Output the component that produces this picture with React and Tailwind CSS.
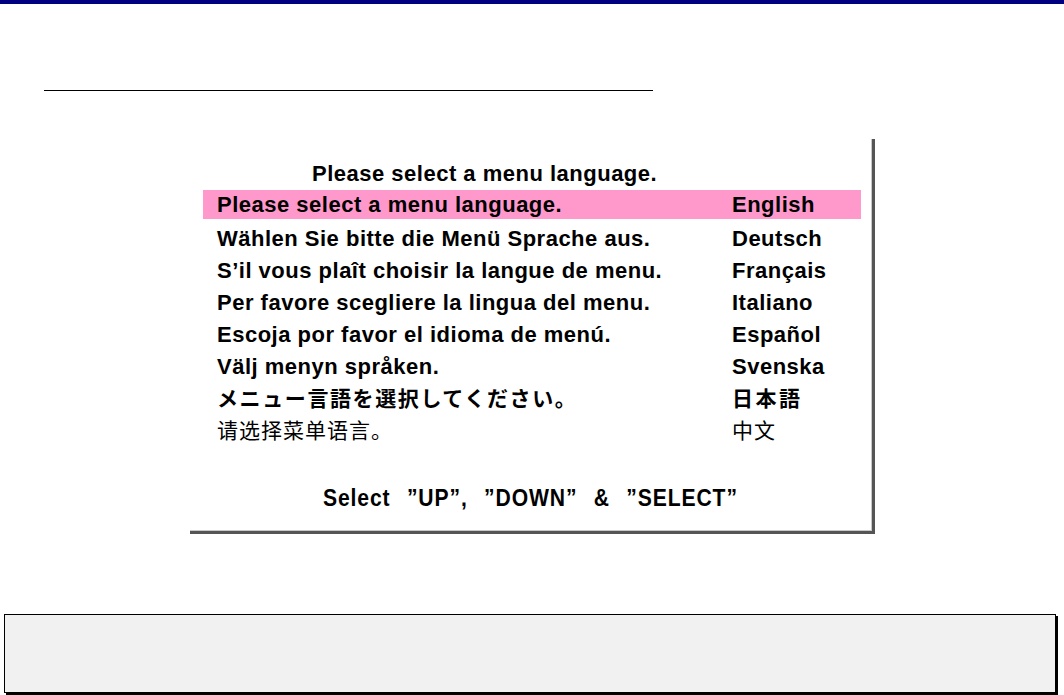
export default function App() {
  const rows = [
    ["Please select a menu language.", "English", false],
    ["Wählen Sie bitte die Menü Sprache aus.", "Deutsch", false],
    ["S’il vous plaît choisir la langue de menu.", "Français", false],
    ["Per favore scegliere la lingua del menu.", "Italiano", false],
    ["Escoja por favor el idioma de menú.", "Español", false],
    ["Välj menyn språken.", "Svenska", false],
    ["メニュー言語を選択してください。", "日本語", "jp"],
    ["请选择菜单语言。", "中文", "zh"],
  ];
  return (
    <div className="w-[1064px] h-[695px] bg-white overflow-hidden flex flex-col" style={{ fontFamily: '"Liberation Sans", Arial, sans-serif' }}>
      <div className="h-[4px] bg-[#000080]" />
      <div className="h-[86px]" />
      <div className="ml-[44px] w-[609px] h-[1px] bg-black" />
      <div className="h-[48px]" />
      <div className="ml-[190px] w-[685px] h-[395px] border-r-[3px] border-b-[3px] border-[#555] flex flex-col">
        <div className="flex-1 flex flex-col border-r border-b border-[#c8c8c8]">
          <div className="h-[51px] pl-[122px] pt-[22px] text-[22px] font-bold tracking-[0.5px] leading-[26px] text-black">
            Please select a menu language.
          </div>
          <div className="ml-[13px] w-[658px] flex flex-col">
            {rows.map(([a, b, kind], i) => (
              <div
                key={i}
                className={
                  i === 0
                    ? "h-[29px] mb-[3px] bg-[#ff99cc] flex items-center text-black"
                    : "h-[32px] flex items-center text-black"
                }
              >
                {kind === "jp" ? (
                  <>
                    <span className="w-[529px] pl-[14px] text-[21px] font-bold tracking-[1.6px]" style={{ fontFamily: '"Noto Sans CJK JP", sans-serif' }}>{a}</span>
                    <span className="text-[21px] font-bold tracking-[2.5px]" style={{ fontFamily: '"Noto Sans CJK JP", sans-serif' }}>{b}</span>
                  </>
                ) : kind === "zh" ? (
                  <>
                    <span className="w-[529px] pl-[14px] text-[21px] font-normal tracking-[1px]" style={{ fontFamily: '"Noto Sans CJK SC", sans-serif' }}>{a}</span>
                    <span className="text-[21px] font-normal tracking-[1px]" style={{ fontFamily: '"Noto Sans CJK SC", sans-serif' }}>{b}</span>
                  </>
                ) : (
                  <>
                    <span className="w-[529px] pl-[14px] text-[22px] font-bold tracking-[0.5px] whitespace-nowrap">{a}</span>
                    <span className="text-[22px] font-bold tracking-[0.5px]">{b}</span>
                  </>
                )}
              </div>
            ))}
          </div>
          <div className="flex-1 flex items-center pl-[133px] pt-[20px]">
            <span className="inline-block origin-left scale-x-[0.88] text-[24px] font-bold tracking-[1px] [word-spacing:11px] whitespace-nowrap">
              Select ”UP”, ”DOWN” &amp; ”SELECT”
            </span>
          </div>
        </div>
      </div>
      <div className="h-[80px]" />
      <div className="ml-[4px] w-[1052px] h-[79px] bg-[#f1f1f1] border border-black shadow-[2px_2px_0_#000]" />
    </div>
  );
}
